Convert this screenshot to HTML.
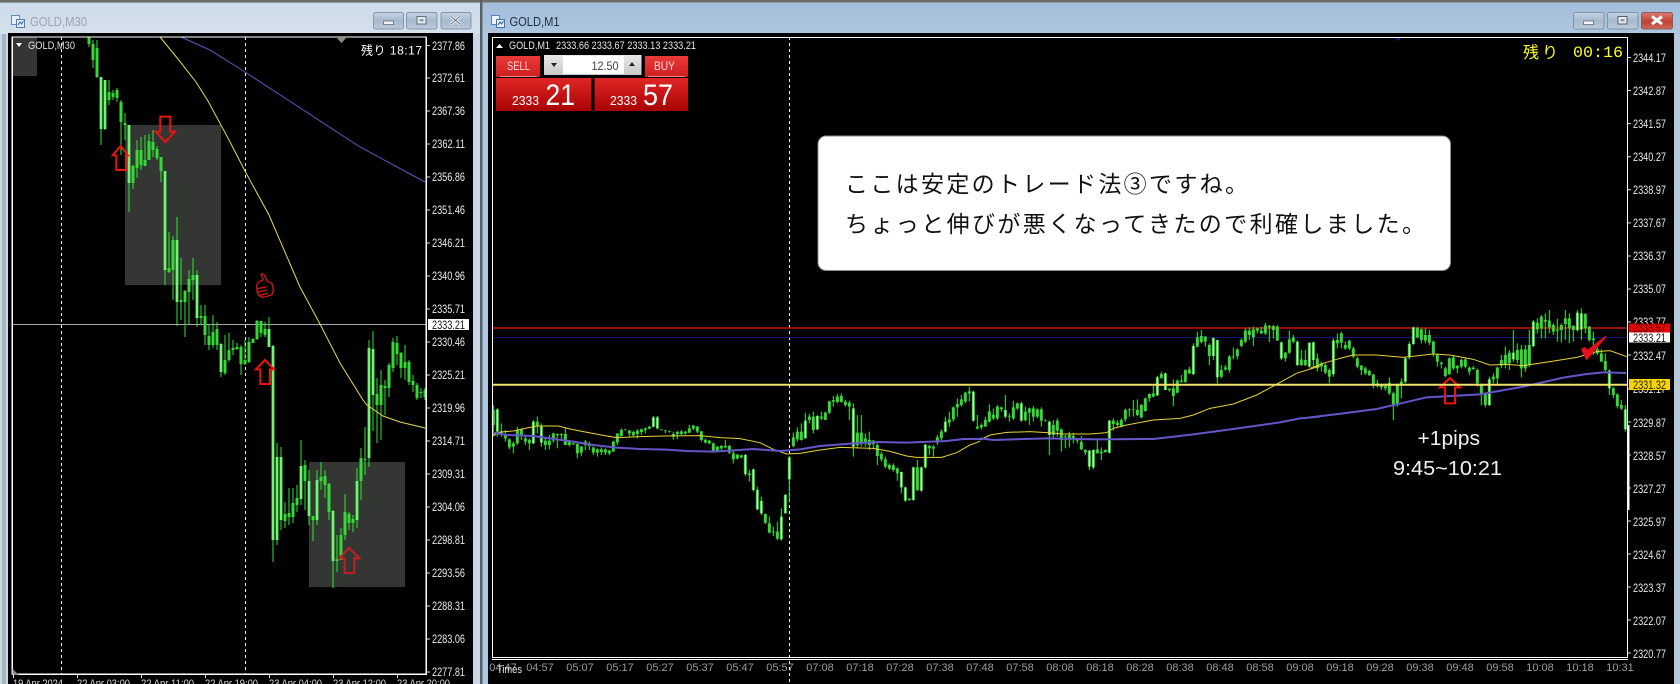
<!DOCTYPE html>
<html lang="ja"><head><meta charset="utf-8"><title>GOLD</title>
<style>
html,body{margin:0;padding:0;background:#b8cade;width:1680px;height:684px;overflow:hidden}
svg{position:absolute;left:0;top:0;display:block}
text{font-family:"Liberation Sans","Noto Sans CJK JP",sans-serif}
.p{fill:#eaeaea;font-size:11.5px}
.t{fill:#9c9c9c;font-size:11px}
.w{stroke:#2fe62f;fill:none}
.b{stroke:#35d835;fill:none}
.c{stroke:#c4ffc4;fill:none}
.ar{fill:none;stroke:#ee1111;stroke-linejoin:miter}
</style></head><body>
<svg width="1680" height="684" viewBox="0 0 1680 684" xmlns="http://www.w3.org/2000/svg">
<defs>
<linearGradient id="tl" x1="0" y1="0" x2="0" y2="1"><stop offset="0" stop-color="#cddbe8"/><stop offset="1" stop-color="#d5e1ec"/></linearGradient>
<linearGradient id="tr" x1="0" y1="0" x2="0" y2="1"><stop offset="0" stop-color="#a4bedb"/><stop offset="1" stop-color="#aec6de"/></linearGradient>
<linearGradient id="btn" x1="0" y1="0" x2="0" y2="1"><stop offset="0" stop-color="#c4d3e2"/><stop offset=".5" stop-color="#a7b9cc"/><stop offset="1" stop-color="#bccbdb"/></linearGradient>
<linearGradient id="cls" x1="0" y1="0" x2="0" y2="1"><stop offset="0" stop-color="#dc7b70"/><stop offset=".55" stop-color="#bf4034"/><stop offset="1" stop-color="#cf6a5c"/></linearGradient>
<linearGradient id="red1" x1="0" y1="0" x2="0" y2="1"><stop offset="0" stop-color="#ea3a3a"/><stop offset="1" stop-color="#cf1e1e"/></linearGradient>
<linearGradient id="red2" x1="0" y1="0" x2="0" y2="1"><stop offset="0" stop-color="#e02626"/><stop offset="1" stop-color="#a80303"/></linearGradient>
<linearGradient id="sp" x1="0" y1="0" x2="0" y2="1"><stop offset="0" stop-color="#e8e8e8"/><stop offset="1" stop-color="#c8c8c8"/></linearGradient>
</defs>

<!-- window frames -->
<rect width="1680" height="684" fill="#b9cbdd"/>
<rect x="0" y="3" width="480" height="681" fill="#c9d7e4"/>
<rect x="0" y="3" width="480" height="31" fill="url(#tl)"/>
<rect x="483" y="3" width="1197" height="31" fill="url(#tr)"/>
<rect x="483" y="34" width="6" height="650" fill="#aec7e2"/>
<rect x="1674" y="34" width="6" height="650" fill="#b6c8da"/>
<rect x="2" y="34" width="4" height="650" fill="#a9b5c1"/>
<rect x="0" y="0" width="1680" height="2.5" fill="#6b6b6b"/>
<rect x="480" y="0" width="2.5" height="684" fill="#55606a"/>
<rect x="8" y="33" width="465" height="651" fill="#000"/>
<rect x="488" y="33" width="1186" height="651" fill="#000"/>

<!-- title bar left -->
<g>
<rect x="11.5" y="15.5" width="8" height="9" fill="#e8f0f7" stroke="#5b8fc0"/>
<rect x="16.5" y="19.5" width="8" height="8" fill="#dfeaf4" stroke="#4c80b2"/>
<path d="M18 25l2-3 1.500 2 2-3" stroke="#3a6a9a" fill="none"/>
<text x="30" y="26" font-size="13" fill="#97a5b2" textLength="57" lengthAdjust="spacingAndGlyphs">GOLD,M30</text>
<rect x="373.500" y="12.500" width="30" height="16.500" rx="2" fill="url(#btn)" stroke="#8298ad"/>
<rect x="383.500" y="21" width="10" height="3.500" fill="#eef2f6" stroke="#5d6d7d" stroke-width=".8"/>
<rect x="406.500" y="12.500" width="30.500" height="16.500" rx="2" fill="url(#btn)" stroke="#8298ad"/>
<rect x="417" y="16.500" width="9" height="7.500" fill="#e8edf2" stroke="#5d6d7d"/><rect x="419.500" y="19" width="4" height="2.500" fill="#8c9aa8"/>
<rect x="441" y="12.500" width="30" height="16.500" rx="2" fill="url(#btn)" stroke="#8298ad"/>
<path d="M451 16.500l9 7.500M460 16.500l-9 7.500" stroke="#eef2f6" stroke-width="3"/>
<path d="M451 16.500l9 7.500M460 16.500l-9 7.500" stroke="#5d6d7d" stroke-width=".9"/>
</g>
<!-- title bar right -->
<g>
<rect x="491.500" y="15.500" width="8" height="9" fill="#eef4fa" stroke="#4a86c0"/>
<rect x="496.500" y="19.500" width="8" height="8" fill="#e6f0f8" stroke="#3b78b2"/>
<path d="M498 25l2-3 1.500 2 2-3" stroke="#2a5a8a" fill="none"/>
<text x="509.500" y="26" font-size="13" fill="#20303f" textLength="50" lengthAdjust="spacingAndGlyphs">GOLD,M1</text>
<rect x="1573.500" y="12.500" width="30.500" height="16.500" rx="2" fill="url(#btn)" stroke="#7d93ab"/>
<rect x="1583.500" y="21" width="10" height="3.500" fill="#f4f6f8" stroke="#5d6d7d" stroke-width=".8"/>
<rect x="1607.500" y="12.500" width="30.500" height="16.500" rx="2" fill="url(#btn)" stroke="#7d93ab"/>
<rect x="1618" y="16.500" width="9" height="7.500" fill="#e8edf2" stroke="#4d5d6d"/><rect x="1620.500" y="19" width="4" height="2.500" fill="#8c9aa8"/>
<rect x="1641.500" y="12.500" width="31" height="16.500" rx="2" fill="url(#cls)" stroke="#8a5a55"/>
<path d="M1652 16.500l10 7.500M1662 16.500l-10 7.500" stroke="#fff" stroke-width="3"/>
</g>

<!-- LEFT CHART -->
<rect x="12" y="37" width="25" height="39" fill="#333633"/>
<rect x="125" y="125" width="96" height="160" fill="#333633"/>
<rect x="309" y="462" width="96" height="125" fill="#333633"/>
<path d="M61.500 37V674M245.500 37V674" stroke="#fff" stroke-dasharray="3 3"/>
<path d="M13 324.500H426" stroke="#a9a9a9"/>
<path class="w" stroke-width="1" d="M89 37V47M93 40V68M97 40V78M101 77V145M105 80V130M109 80V105M113 90V100M117 88V102M121 100V155M125 113V140M129 125V212M133 165V189M137 140V178M141 137V170M145 135V165M149 134V160M153 130V157M157 146V160M161 157V182M165 171V285M169 232V273M173 236V300M177 217V326M181 258V320M185 290V337M189 270V325M193 258V300M197 270V327M201 305V325M205 305V345M209 325V350M213 315V348M217 322V350M221 343V377M225 335V375M229 333V362M233 340V355M237 343V350M241 345V375M245 340V365M249 337V363M253 338V343M257 320V340M261 321V337M265 322V337M269 317V347M273 345V562M277 443V545M281 447V530M285 502V528M289 488V525M293 488V523M297 485V512M301 440V505M305 460V510M309 470V525M313 516V541M317 470V525M321 462V490M325 470V498M329 483V520M333 510V588M337 535V572M341 528V560M345 494V540M349 512V530M353 515V532M357 468V528M361 448V500M365 427V475M369 340V467M373 331V431M377 378V443M381 370V440M385 380V415M389 363V397M393 338V372M397 336V365M401 352V378M405 345V380M409 360V385M413 375V392M417 383V400M421 388V398M425 388V400"/>
<path id="lb" class="b" stroke-width="3" d="M89 37V44M93 44V60M97 48V77M101 77V129M105 80V129M109 92V100M113 93V97M117 90V98M121 102V122M125 123V125M129 125V183M133 166V183M137 150V168M141 150V165M145 160V166M149 141V160M153 142V150M157 149V158M161 157V171M165 171V270M169 268V272M173 240V270M177 240V302M181 300V302M185 291V302M189 279V292M193 275V280M197 275V318M201 316V318M205 316V335M209 336V345M213 332V345M217 329V345M221 344V372M225 360V373M229 350V360M233 348V350M237 347V349M241 347V364M245 360V364M249 342V362M253 339V343M257 321V339M261 321V333M265 329V335M269 329V347M273 346V540M277 457V540M281 457V520M285 514V521M289 513V517M293 503V517M297 498V505M301 466V499M305 465V481M309 481V516M313 516V520M317 480V520M321 477V481M325 476V485M329 484V512M333 511V561M337 559V561M341 535V560M345 512V535M349 514V523M353 519V523M357 481V520M361 458V481M365 459V460M369 348V458M373 349V395M377 394V405M381 385V405M385 386V388M389 365V388M393 342V368M397 343V354M401 353V368M405 362V368M409 362V382M413 381V385M417 385V398M421 392V393M425 390V397"/>
<path class="c" stroke-width="1" d="M101 77V129M105 80V129M129 125V183M165 171V270M177 240V302M197 275V318M221 344V372M269 329V347M273 346V540M277 457V540M281 457V520M301 466V499M309 481V516M317 480V520M333 511V561M369 348V458M373 349V395M357 481V520"/>
<polyline points="160,37 178,59 196,82 208,101 229,140 245.500,172 269,215 300,287 320,324 340,363 363,400 367,405 383,416 400,422 425,428" fill="none" stroke="#e6d85a" stroke-width="1"/>
<polyline points="181,37 210,50 245,72 288,100 360,147 425,182" fill="none" stroke="#5a5ac0" stroke-width="1"/>
<!-- left arrows -->
<g transform="scale(.33333)">
<polygon class="ar" stroke-width="6" points="362,138 384,166 378,166 378,210 349,210 349,166 338,166" transform="translate(0,300)"/>
<polygon class="ar" stroke-width="6" points="481,350 511,350 511,395 525,395 496,426 467,395 481,395"/>
<polygon class="ar" stroke-width="6" points="795,1080 822,1108 810,1108 810,1152 781,1152 781,1108 768,1108"/>
<polygon class="ar" stroke="#c91a1a" stroke-width="6" style="stroke:#c41e24" points="1047,1643 1078,1675 1063,1675 1063,1719 1034,1719 1034,1675 1018,1675"/>
<g fill="none" stroke="#c81818" stroke-width="4">
<path d="M770 860Q770 845 790 840L783 822Q795 820 800 842L815 850Q825 870 815 885L790 892Q770 890 770 860Z"/>
<path d="M772 866L800 860M774 876L802 870M778 886L804 880"/>
</g>
</g>
<path d="M12 37H426V674H12Z" fill="none" stroke="#fff"/>
<path d="M12.500 37V674M426.500 37V674M12 674.500H427" stroke="#fff" fill="none"/>
<polygon points="336,37 347,37 341.500,43" fill="#8c8c8c"/>
<polygon points="12.500,669 19,675 12.500,675" fill="#8c8c8c"/>
<polygon points="16,43 22,43 19,47" fill="#fff"/>
<text x="28" y="49" font-size="11" fill="#e0e0e0" textLength="47" lengthAdjust="spacingAndGlyphs">GOLD,M30</text>
<text x="361" y="54.500" font-size="12" fill="#fff" textLength="61">残り 18:17</text>
<!-- left prices -->
<g class="pl">
<text class="p" x="432" y="50" textLength="33" lengthAdjust="spacingAndGlyphs">2377.86</text>
<text class="p" x="432" y="82" textLength="33" lengthAdjust="spacingAndGlyphs">2372.61</text>
<text class="p" x="432" y="115" textLength="33" lengthAdjust="spacingAndGlyphs">2367.36</text>
<text class="p" x="432" y="148" textLength="33" lengthAdjust="spacingAndGlyphs">2362.11</text>
<text class="p" x="432" y="181" textLength="33" lengthAdjust="spacingAndGlyphs">2356.86</text>
<text class="p" x="432" y="214" textLength="33" lengthAdjust="spacingAndGlyphs">2351.46</text>
<text class="p" x="432" y="247" textLength="33" lengthAdjust="spacingAndGlyphs">2346.21</text>
<text class="p" x="432" y="280" textLength="33" lengthAdjust="spacingAndGlyphs">2340.96</text>
<text class="p" x="432" y="313" textLength="33" lengthAdjust="spacingAndGlyphs">2335.71</text>
<text class="p" x="432" y="346" textLength="33" lengthAdjust="spacingAndGlyphs">2330.46</text>
<text class="p" x="432" y="379" textLength="33" lengthAdjust="spacingAndGlyphs">2325.21</text>
<text class="p" x="432" y="412" textLength="33" lengthAdjust="spacingAndGlyphs">2319.96</text>
<text class="p" x="432" y="445" textLength="33" lengthAdjust="spacingAndGlyphs">2314.71</text>
<text class="p" x="432" y="478" textLength="33" lengthAdjust="spacingAndGlyphs">2309.31</text>
<text class="p" x="432" y="511" textLength="33" lengthAdjust="spacingAndGlyphs">2304.06</text>
<text class="p" x="432" y="544" textLength="33" lengthAdjust="spacingAndGlyphs">2298.81</text>
<text class="p" x="432" y="577" textLength="33" lengthAdjust="spacingAndGlyphs">2293.56</text>
<text class="p" x="432" y="610" textLength="33" lengthAdjust="spacingAndGlyphs">2288.31</text>
<text class="p" x="432" y="643" textLength="33" lengthAdjust="spacingAndGlyphs">2283.06</text>
<text class="p" x="432" y="676" textLength="33" lengthAdjust="spacingAndGlyphs">2277.81</text>
</g>
<path d="M427 45.500h3M427 78h3M427 111h3M427 144h3M427 177h3M427 210h3M427 243h3M427 276h3M427 309h3M427 342h3M427 375h3M427 408h3M427 441h3M427 474h3M427 507h3M427 540h3M427 573h3M427 606h3M427 639h3M427 672h3" stroke="#ddd"/>
<rect x="428" y="319" width="41" height="11" fill="#fff"/>
<text x="432" y="329" font-size="11.500" fill="#111" textLength="33" lengthAdjust="spacingAndGlyphs">2333.21</text>
<path d="M13.500 674v4M77.500 674v4M141.500 674v4M205.500 674v4M269.500 674v4M333.500 674v4M397.500 674v4" stroke="#ddd"/>
<g>
<text class="t" style="fill:#d8d8d8" x="13" y="687" textLength="50" lengthAdjust="spacingAndGlyphs">19 Apr 2024</text>
<text class="t" style="fill:#d8d8d8" x="77" y="687" textLength="53" lengthAdjust="spacingAndGlyphs">22 Apr 03:00</text>
<text class="t" style="fill:#d8d8d8" x="141" y="687" textLength="53" lengthAdjust="spacingAndGlyphs">22 Apr 11:00</text>
<text class="t" style="fill:#d8d8d8" x="205" y="687" textLength="53" lengthAdjust="spacingAndGlyphs">22 Apr 19:00</text>
<text class="t" style="fill:#d8d8d8" x="269" y="687" textLength="53" lengthAdjust="spacingAndGlyphs">23 Apr 04:00</text>
<text class="t" style="fill:#d8d8d8" x="333" y="687" textLength="53" lengthAdjust="spacingAndGlyphs">23 Apr 12:00</text>
<text class="t" style="fill:#d8d8d8" x="397" y="687" textLength="53" lengthAdjust="spacingAndGlyphs">23 Apr 20:00</text>
</g>

<!-- RIGHT CHART -->
<path d="M789.500 37V684" stroke="#fff" stroke-dasharray="3 3"/>
<path d="M493 328H1627" stroke="#c81414" stroke-width="1.500"/>
<path d="M493 337.500H1627" stroke="#14147a"/>
<path d="M1394 37h8l-4 4z" fill="#151590"/>

<g transform="translate(480,370) scale(.33333)">
<path class="w" stroke-width="3" d="M40 105V195M52 115V200M64 160V200M76 180V215M88 205V238M100 215V250M112 170V225M124 175V210M136 195V225M148 205V240M160 150V222M172 140V190M184 160V230M196 205V240M208 195V238M220 188V218M232 190V235M244 190V210M256 175V225M268 210V230M280 218V225M292 220V265M304 228V258M316 210V240M328 215V240M340 230V255M352 235V260M364 232V255M376 235V255M388 240V255M400 212V245M412 190V225M424 175V200M436 178V181M448 180V200M460 182V200M472 178V205M484 175V195M496 172V190M508 168V178M520 138V172M532 138V178M544 178V182M556 180V190M568 182V188M580 185V208M592 183V208M604 180V195M616 183V195M628 165V190M640 165V180M652 168V190M664 183V215M676 205V220M688 210V222M700 218V245M712 228V245M724 225V240M736 210V235M748 225V252M760 240V280M772 252V268M784 254V265M796 252V318M808 300V335M820 296V365M832 350V420M844 380V435M856 430V462M868 440V490M880 470V498M892 455V510M904 415V512M916 372V430M928 258V395M940 188V232M952 172V215M964 160V212M976 128V205M988 132V160M1000 125V190M1012 135V180M1024 125V150M1036 125V150M1048 92V132M1060 78V110M1072 72V100M1084 70V98M1096 90V110M1108 92V150M1120 100V260M1132 135V235M1144 135V230M1156 190V230M1168 185V240M1180 210V235M1192 220V285M1204 245V275M1216 260V295M1228 280V300M1240 280V305M1252 292V332M1264 305V370M1276 350V395M1288 385V392M1300 290V392M1312 270V362M1324 290V365M1336 222V295M1348 225V255M1360 225V260M1372 195V225M1384 178V210M1396 140V188M1408 125V170M1420 110V155M1432 85V140M1444 75V110M1456 65V100M1468 50V95M1480 62V155M1492 135V178"/>
<path class="b" stroke-width="9" d="M40 120V165M52 118V185M64 185V190M76 195V205M88 208V232M100 220V230M112 180V220M124 178V195M136 205V215M148 210V220M160 155V220M172 155V168M184 170V218M196 212V225M208 212V225M220 190V212M232 192V195M244 192V195M256 192V225M268 215V225M280 220V223M292 222V250M304 230V248M316 215V225M328 220V228M340 232V248M352 238V248M364 238V246M376 238V248M388 242V250M400 215V245M412 190V218M424 180V198M436 178V180M448 182V190M460 186V196M472 182V192M484 178V186M496 176V180M508 170V176M520 142V170M532 142V175M544 178V180M556 181V183M568 184V186M580 192V200M592 186V192M604 184V192M616 185V190M628 175V188M640 167V176M652 170V185M664 184V210M676 210V218M688 212V220M700 220V242M712 230V242M724 228V235M736 228V232M748 228V248M760 250V268M772 254V266M784 256V262M796 255V312M808 310V315M820 298V360M832 360V418M844 393V430M856 432V458M868 460V488M880 485V488M892 485V506M904 440V508M916 375V430M928 262V328M940 202V228M952 185V208M964 185V210M976 152V205M988 140V150M1000 140V180M1012 138V178M1024 140V145M1036 128V150M1048 94V128M1060 90V95M1072 80V96M1084 78V96M1096 95V105M1108 98V110M1120 115V230M1132 188V225M1144 188V218M1156 205V215M1168 210V225M1180 212V222M1192 225V258M1204 252V268M1216 268V290M1228 285V296M1240 286V300M1252 295V310M1264 306V352M1276 352V392M1288 386V390M1300 292V390M1312 292V360M1324 292V362M1336 224V292M1348 228V235M1360 230V236M1372 202V218M1384 184V205M1396 155V185M1408 148V158M1420 112V148M1432 102V112M1444 88V105M1456 68V95M1468 64V70M1480 65V152M1492 170V176"/>
<path class="c" stroke-width="3" d="M52 118V185M160 155V220M184 170V218M520 142V170M532 142V175M796 255V312M820 298V360M832 360V418M844 393V430M904 440V508M916 375V430M928 262V328M976 152V205M1012 138V178M1120 115V230M1264 306V352M1276 352V392M1300 292V390M1324 292V362M1336 224V292M1480 65V152M1396 155V185"/>
</g>

<g transform="translate(980,310) scale(.33333)">
<path class="w" stroke-width="3" d="M4 340V358M16 320V350M28 283V338M40 295V330M52 285V330M64 290V305M76 255V325M88 310V335M100 272V330M112 278V300M124 275V335M136 290V335M148 292V345M160 288V335M172 295V325M184 292V350M196 328V335M208 332V435M220 330V385M232 325V380M244 355V425M256 375V415M268 365V412M280 368V400M292 385V400M304 378V420M316 418V435M328 420V480M340 418V478M352 390V430M364 412V450M376 418V428M388 330V430M400 325V362M412 330V350M424 325V352M436 295V335M448 295V320M460 270V320M472 268V318M484 282V325M496 262V305M508 250V275M520 228V262M532 198V258M544 185V205M556 188V240M568 235V245M580 208V288M592 208V250M604 195V218M616 178V218M628 170V192M640 100V195M652 65V112M664 60V100M676 78V110M688 100V165M700 82V150M712 90V220M724 165V205M736 165V182M748 135V188M760 112V148M772 115V148M784 85V112M796 55V100M808 52V90M820 50V108M832 52V70M844 50V72M856 38V75M868 45V96M880 45V85M892 45V92M904 95V150M916 125V155M928 62V132M940 75V100M952 92V168M964 120V168M976 120V168M988 98V172M1000 95V170M1012 130V185"/>
<path class="b" stroke-width="9" d="M4 345V352M16 330V350M28 304V335M40 314V325M52 290V325M64 292V298M76 300V320M88 318V320M100 292V325M112 280V295M124 280V332M136 305V330M148 295V308M160 295V320M172 298V320M184 298V332M196 330V332M208 335V375M220 345V375M232 332V362M244 358V390M256 378V380M268 375V385M280 378V384M292 386V392M304 396V418M316 420V428M328 422V470M340 420V472M352 418V430M364 425V430M376 420V426M388 332V428M400 332V342M412 338V345M424 330V348M436 300V328M448 298V300M460 298V300M472 300V315M484 285V322M496 265V303M508 252V265M520 250V260M532 202V256M544 192V205M556 190V240M568 236V240M580 235V258M592 212V248M604 212V216M616 180V216M628 178V190M640 108V192M652 82V110M664 78V96M676 80V95M688 105V138M700 84V138M712 90V202M724 180V200M736 172V178M748 140V180M760 140V142M772 118V138M784 90V108M796 62V95M808 62V75M820 58V82M832 55V62M844 62V70M856 46V70M868 48V52M880 48V60M892 50V92M904 97V145M916 128V145M928 88V128M940 82V95M952 95V165M964 148V165M976 150V165M988 98V170M1000 97V150M1012 145V175"/>
<path class="c" stroke-width="3" d="M76 300V320M124 280V332M208 335V375M328 422V470M340 420V472M388 332V428M532 202V256M556 190V240M640 108V192M712 90V202M700 84V138M904 97V145M952 95V165M988 98V170M1000 97V150"/>
</g>

<g transform="translate(1310,300) scale(.33333)">
<path class="w" stroke-width="3" d="M34 185V215M46 190V222M58 205V250M70 115V230M82 100V145M94 95V145M106 125V150M118 120V150M130 140V175M142 170V205M154 195V225M166 200V225M178 210V228M190 222V265M202 240V262M214 250V270M226 250V272M238 232V285M250 275V360M262 250V320M274 235V295M286 170V250M298 125V178M310 80V135M322 80V115M334 85V130M346 85V130M358 90V135M370 122V170M382 160V200M394 185V205M406 200V232M418 172V225M430 165V210M442 195V220M454 175V205M466 175V205M478 200V225M490 198V210M502 205V260M514 250V315M526 280V322M538 230V318M550 220V250M562 200V252M574 165V205M586 140V205M598 150V210M610 90V185M622 130V190M634 135V232M646 135V215M658 90V200M670 60V142M682 55V100M694 45V115M706 40V115M718 30V100M730 70V105M742 55V125M754 70V128M766 30V120M778 40V130M790 75V125M802 30V95M814 25V120M826 40V100M838 78V125M850 95V165M862 130V165M874 148V185M886 160V215M898 208V285M910 260V295M922 280V325M934 300V330M946 315V395"/>
<path class="b" stroke-width="9" d="M34 190V200M46 195V218M58 210V230M70 122V222M82 120V130M94 100V128M106 135V145M118 122V145M130 145V170M142 175V200M154 197V210M166 205V220M178 213V225M190 224V255M202 250V258M214 255V262M226 258V265M238 248V280M250 280V315M262 255V315M274 245V255M286 175V245M298 132V172M310 82V132M322 84V112M334 88V120M346 105V122M358 105V128M370 125V160M382 165V185M394 188V192M406 205V228M418 175V222M430 172V205M442 198V205M454 180V200M466 178V200M478 203V215M490 203V207M502 210V250M514 255V285M526 282V315M538 238V315M550 230V238M562 203V235M574 180V197M586 165V195M598 158V190M610 158V178M622 150V180M634 148V205M646 148V205M658 135V195M670 65V138M682 68V88M694 50V85M706 60V65M718 62V82M730 75V95M742 88V92M754 75V90M766 55V72M778 55V85M790 78V90M802 38V90M814 40V88M826 42V85M838 80V120M850 115V120M862 148V160M874 160V185M886 183V210M898 212V265M910 265V285M922 283V318M934 315V326M946 328V388"/>
<path class="c" stroke-width="3" d="M70 122V222M286 175V245M298 132V172M310 82V132M610 158V178M670 65V138M802 38V90M814 40V88M898 212V265M946 328V388M538 238V315"/>
</g>

<!-- MAs right -->
<g fill="none">
<g transform="translate(480,370) scale(.33333)">
<polyline stroke="#e8d23a" stroke-width="3" points="38,198 60,186 100,183 135,175 170,168 235,168 270,177 310,185 370,196 410,203 480,200 550,198 660,197 720,203 780,206 840,218 880,238 920,252 960,250 1020,240 1080,232 1180,235 1230,244 1280,258 1310,262 1385,262 1430,248 1470,225 1500,214"/>
<polyline stroke="#6455c8" stroke-width="6" points="38,188 80,195 160,198 200,204 280,215 340,225 410,233 480,237 560,239 620,243 700,245 760,241 820,237 900,243 960,238 1020,228 1120,220 1200,216 1280,218 1400,213 1450,207 1500,207"/>
</g>
<g transform="translate(980,310) scale(.33333)">
<polyline stroke="#e8d23a" stroke-width="3" points="0,390 30,375 80,367 150,365 200,368 250,372 330,372 380,368 400,355 440,345 520,330 600,325 640,315 690,295 760,282 830,255 880,228 950,190 1020,168"/>
<polyline stroke="#6455c8" stroke-width="6" points="0,385 40,390 200,385 350,388 520,387 640,373 760,357 900,337 960,325 1020,320"/>
</g>
<g transform="translate(1310,300) scale(.33333)">
<polyline stroke="#e8d23a" stroke-width="3" points="0,205 40,190 90,175 130,165 200,165 280,172 370,162 420,165 490,178 540,195 590,193 640,197 720,185 800,172 860,155 900,152 950,170"/>
<polyline stroke="#6455c8" stroke-width="6" points="0,352 100,340 200,327 260,313 350,292 510,283 640,260 760,233 830,222 880,217 948,219"/>
<polygon class="ar" stroke-width="6" points="420,234 450,262 435,262 435,310 405,310 405,262 390,262"/>
<path d="M815 148L830 178L887 110L832 152L825 143Z" fill="#e8101c" stroke="#e8101c" stroke-width="4" stroke-linejoin="round"/>
</g>
</g>
<path d="M493 384.700H1627" stroke="#f3e26a" stroke-width="2"/>

<!-- right plot border -->
<path d="M492.500 37V657M1627.500 37V657M492 37.500H1628M492 657.500H1628M492 659.500H1628" stroke="#fff" fill="none"/>
<rect x="1627" y="425" width="2.500" height="85" fill="#fff"/>
<path d="M1628 57.500h3M1628 90.500h3M1628 123.600h3M1628 156.700h3M1628 189.800h3M1628 222.900h3M1628 256h3M1628 289h3M1628 322h3M1628 355h3M1628 389h3M1628 422h3M1628 455h3M1628 488h3M1628 521h3M1628 554h3M1628 587h3M1628 620h3M1628 653h3" stroke="#ddd"/>
<g>
<text class="p" x="1633" y="62" textLength="33" lengthAdjust="spacingAndGlyphs">2344.17</text>
<text class="p" x="1633" y="95" textLength="33" lengthAdjust="spacingAndGlyphs">2342.87</text>
<text class="p" x="1633" y="128" textLength="33" lengthAdjust="spacingAndGlyphs">2341.57</text>
<text class="p" x="1633" y="161" textLength="33" lengthAdjust="spacingAndGlyphs">2340.27</text>
<text class="p" x="1633" y="194" textLength="33" lengthAdjust="spacingAndGlyphs">2338.97</text>
<text class="p" x="1633" y="227" textLength="33" lengthAdjust="spacingAndGlyphs">2337.67</text>
<text class="p" x="1633" y="260" textLength="33" lengthAdjust="spacingAndGlyphs">2336.37</text>
<text class="p" x="1633" y="293" textLength="33" lengthAdjust="spacingAndGlyphs">2335.07</text>
<text class="p" x="1633" y="326" textLength="33" lengthAdjust="spacingAndGlyphs">2333.77</text>
<text class="p" x="1633" y="360" textLength="33" lengthAdjust="spacingAndGlyphs">2332.47</text>
<text class="p" x="1633" y="393" textLength="33" lengthAdjust="spacingAndGlyphs">2331.17</text>
<text class="p" x="1633" y="427" textLength="33" lengthAdjust="spacingAndGlyphs">2329.87</text>
<text class="p" x="1633" y="460" textLength="33" lengthAdjust="spacingAndGlyphs">2328.57</text>
<text class="p" x="1633" y="493" textLength="33" lengthAdjust="spacingAndGlyphs">2327.27</text>
<text class="p" x="1633" y="526" textLength="33" lengthAdjust="spacingAndGlyphs">2325.97</text>
<text class="p" x="1633" y="559" textLength="33" lengthAdjust="spacingAndGlyphs">2324.67</text>
<text class="p" x="1633" y="592" textLength="33" lengthAdjust="spacingAndGlyphs">2323.37</text>
<text class="p" x="1633" y="625" textLength="33" lengthAdjust="spacingAndGlyphs">2322.07</text>
<text class="p" x="1633" y="658" textLength="33" lengthAdjust="spacingAndGlyphs">2320.77</text>
</g>
<rect x="1629" y="323.500" width="41" height="9" fill="#f00000"/>
<text x="1633" y="332" font-size="11.500" fill="#3a0000" textLength="33" lengthAdjust="spacingAndGlyphs">2333.57</text>
<rect x="1629" y="332.500" width="41" height="10" fill="#fff"/>
<text x="1633" y="342" font-size="11.500" fill="#111" textLength="33" lengthAdjust="spacingAndGlyphs">2333.21</text>
<rect x="1629" y="379" width="41" height="11" fill="#f5d400"/>
<text x="1633" y="389" font-size="11.500" fill="#222" textLength="33" lengthAdjust="spacingAndGlyphs">2331.32</text>

<!-- header right -->
<polygon points="496,48 503,48 499.500,44" fill="#fff"/>
<text x="509" y="49" font-size="11" fill="#e6e6e6" textLength="41" lengthAdjust="spacingAndGlyphs">GOLD,M1</text>
<text x="556" y="49" font-size="11" fill="#e6e6e6" textLength="140" lengthAdjust="spacingAndGlyphs">2333.66 2333.67 2333.13 2333.21</text>
<text x="1523" y="58" font-size="16" fill="#ffff22" textLength="35">残り</text>
<text x="1573" y="57" font-size="16" fill="#ffff22" font-family="Liberation Mono" style="font-family:'Liberation Mono',monospace" textLength="50" lengthAdjust="spacingAndGlyphs">00:16</text>

<!-- trade panel -->
<rect x="496" y="56" width="44" height="21" fill="url(#red1)"/>
<path d="M500 76.500H537" stroke="#f08a8a"/>
<text x="507" y="70" font-size="12" fill="#f6dcdc" textLength="23" lengthAdjust="spacingAndGlyphs">SELL</text>
<rect x="645" y="56" width="43" height="21" fill="url(#red1)"/>
<path d="M648 76.500H685" stroke="#f08a8a"/>
<text x="654" y="70" font-size="12" fill="#f6dcdc" textLength="21" lengthAdjust="spacingAndGlyphs">BUY</text>
<rect x="544" y="55" width="97.500" height="20" fill="url(#sp)"/>
<rect x="563" y="56" width="61" height="18" fill="#fff"/>
<polygon points="551,63 557,63 554,67" fill="#222"/>
<polygon points="629,66 635,66 632,62" fill="#222"/>
<text x="591.500" y="70" font-size="12" fill="#444" textLength="27" lengthAdjust="spacingAndGlyphs">12.50</text>
<rect x="496" y="78" width="95.500" height="33" fill="url(#red2)"/>
<rect x="594.500" y="78" width="93.500" height="33" fill="url(#red2)"/>
<text x="512" y="105" font-size="13" fill="#fff" textLength="27" lengthAdjust="spacingAndGlyphs">2333</text>
<text x="545.500" y="105" font-size="30" fill="#fff" textLength="29.500" lengthAdjust="spacingAndGlyphs">21</text>
<text x="610" y="105" font-size="13" fill="#fff" textLength="27" lengthAdjust="spacingAndGlyphs">2333</text>
<text x="643" y="105" font-size="30" fill="#fff" textLength="30" lengthAdjust="spacingAndGlyphs">57</text>

<!-- callout -->
<rect x="818" y="136" width="632.500" height="134.500" rx="8" fill="#fff" stroke="#8c8c8c" stroke-width="1"/>
<text x="845" y="192" font-size="23" fill="#111" textLength="403" style="font-family:'WenQuanYi Zen Hei','Noto Sans CJK JP',sans-serif">ここは安定のトレード法③ですね。</text>
<text x="845" y="232" font-size="23" fill="#111" textLength="580" style="font-family:'WenQuanYi Zen Hei','Noto Sans CJK JP',sans-serif">ちょっと伸びが悪くなってきたので利確しました。</text>

<!-- notes -->
<text x="1417.500" y="445" font-size="20" fill="#f0f0f0" textLength="62.500" lengthAdjust="spacingAndGlyphs">+1pips</text>
<text x="1393" y="475" font-size="20" fill="#f0f0f0" textLength="109" lengthAdjust="spacingAndGlyphs">9:45~10:21</text>

<!-- time axis right -->
<g text-anchor="middle">
<text class="t" x="503" y="671">04:47</text>
<text class="t" x="540" y="671">04:57</text>
<text class="t" x="580" y="671">05:07</text>
<text class="t" x="620" y="671">05:17</text>
<text class="t" x="660" y="671">05:27</text>
<text class="t" x="700" y="671">05:37</text>
<text class="t" x="740" y="671">05:47</text>
<text class="t" x="780" y="671">05:57</text>
<text class="t" x="820" y="671">07:08</text>
<text class="t" x="860" y="671">07:18</text>
<text class="t" x="900" y="671">07:28</text>
<text class="t" x="940" y="671">07:38</text>
<text class="t" x="980" y="671">07:48</text>
<text class="t" x="1020" y="671">07:58</text>
<text class="t" x="1060" y="671">08:08</text>
<text class="t" x="1100" y="671">08:18</text>
<text class="t" x="1140" y="671">08:28</text>
<text class="t" x="1180" y="671">08:38</text>
<text class="t" x="1220" y="671">08:48</text>
<text class="t" x="1260" y="671">08:58</text>
<text class="t" x="1300" y="671">09:08</text>
<text class="t" x="1340" y="671">09:18</text>
<text class="t" x="1380" y="671">09:28</text>
<text class="t" x="1420" y="671">09:38</text>
<text class="t" x="1460" y="671">09:48</text>
<text class="t" x="1500" y="671">09:58</text>
<text class="t" x="1540" y="671">10:08</text>
<text class="t" x="1580" y="671">10:18</text>
<text class="t" x="1620" y="671">10:31</text>
</g>
<text x="497" y="673" font-size="11" fill="#e8e8e8" textLength="25" lengthAdjust="spacingAndGlyphs">Times</text>
</svg>
</body></html>
